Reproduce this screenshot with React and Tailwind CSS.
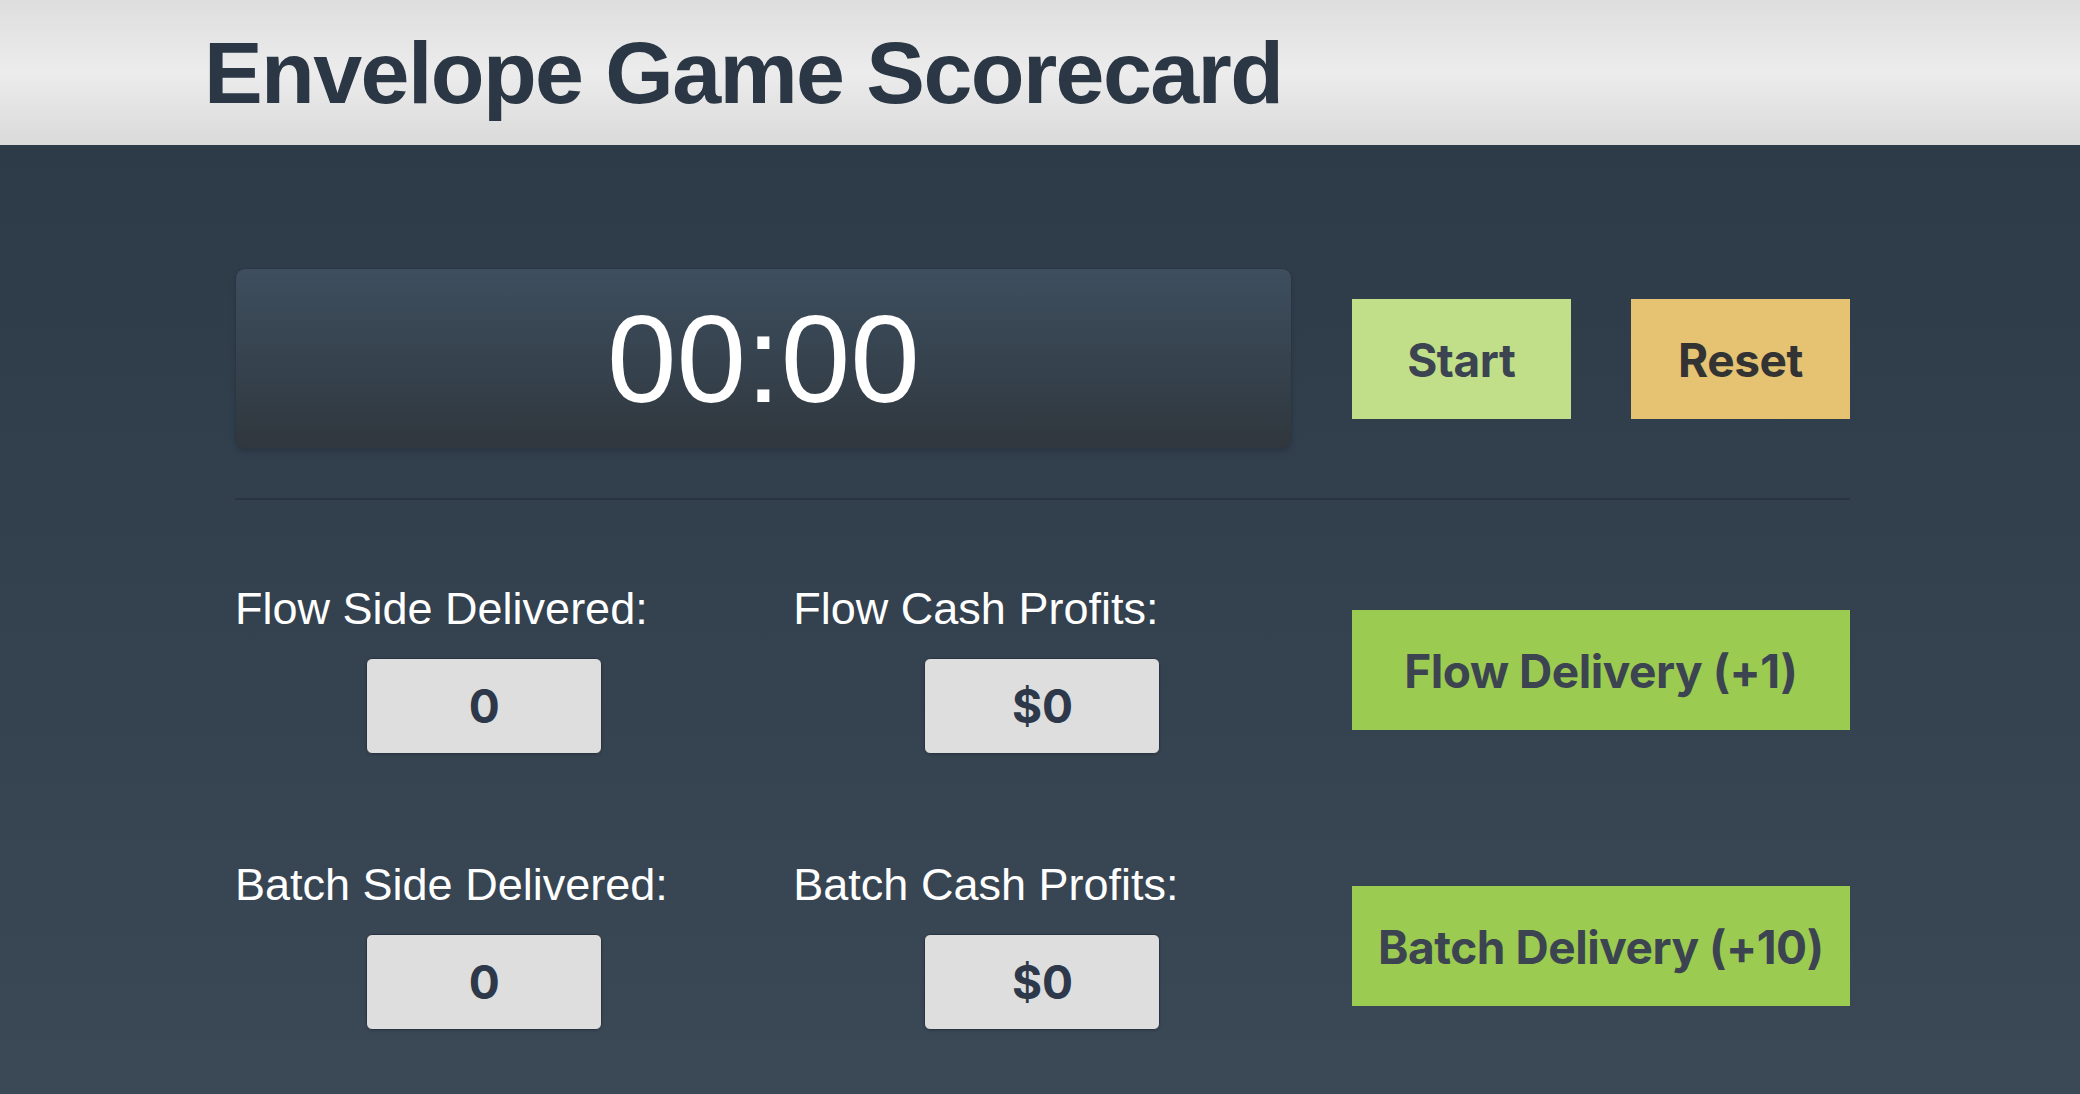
import React, { useState, useEffect } from "react";

const labelFont = { fontFamily: '"Liberation Sans", Arial, sans-serif' };
const btnFont = { fontFamily: 'Inter, "Noto Sans", sans-serif' };

const formatTime = (s) => {
  const m = String(Math.floor(s / 60)).padStart(2, "0");
  const sec = String(s % 60).padStart(2, "0");
  return `${m}:${sec}`;
};

// One stat: label on top, grey value box centred under it
const Stat = ({ label, value }) => (
  <div className="flex flex-col">
    <div className="text-[45px] leading-none text-white" style={labelFont}>
      {label}
    </div>
    <div
      className="mx-auto mt-[27px] flex h-[96px] w-[236px] items-center justify-center rounded-md border border-[#2a3441] bg-[#dedede] text-[46px] font-bold text-[#2d394a] shadow-sm"
      style={btnFont}
    >
      {value}
    </div>
  </div>
);

const BigButton = ({ children, className, onClick }) => (
  <button
    onClick={onClick}
    className={`flex h-[120px] items-center justify-center pt-[3px] text-[46px] font-bold tracking-[-0.01em] ${className}`}
    style={btnFont}
  >
    {children}
  </button>
);

export default function App() {
  const [seconds, setSeconds] = useState(0);
  const [running, setRunning] = useState(false);
  const [flow, setFlow] = useState(0);
  const [batch, setBatch] = useState(0);

  useEffect(() => {
    if (!running) return;
    const id = setInterval(() => setSeconds((s) => s + 1), 1000);
    return () => clearInterval(id);
  }, [running]);

  const reset = () => {
    setRunning(false);
    setSeconds(0);
    setFlow(0);
    setBatch(0);
  };

  return (
    <div className="flex min-h-screen flex-col">
      <header className="flex h-[145px] items-center bg-gradient-to-b from-[#dedede] via-[#ececec] to-[#dadada] pl-[204px]">
        <h1
          className="text-[88px] font-bold leading-none tracking-[-1.6px] text-[#2b3744]"
          style={labelFont}
        >
          Envelope Game Scorecard
        </h1>
      </header>

      <main className="flex-1 bg-gradient-to-b from-[#2d3a48] to-[#3b4856] pb-16 pl-[235px] pr-[230px] pt-[123px]">
        <div className="grid grid-cols-3 items-center gap-x-[60px]">
          <div className="col-span-2 flex h-[181px] items-center justify-center rounded-[10px] border border-[#2b3643] bg-gradient-to-b from-[#3e4e5e] via-[#36434f] to-[#30373d] shadow-md">
            <span
              className="text-[125px] leading-none text-white"
              style={labelFont}
            >
              {formatTime(seconds)}
            </span>
          </div>
          <div className="flex gap-[60px]">
            <BigButton
              className="flex-1 bg-[#c0df88] text-[#3b4450]"
              onClick={() => setRunning(true)}
            >
              Start
            </BigButton>
            <BigButton
              className="flex-1 bg-[#e5c373] text-[#333333]"
              onClick={reset}
            >
              Reset
            </BigButton>
          </div>
        </div>

        <div className="mt-[49px] border-t-2 border-[#2a3541]" />

        <div className="mt-[86px] grid grid-cols-3 items-center gap-x-[60px] gap-y-[108px]">
          <Stat label="Flow Side Delivered:" value={flow} />
          <Stat label="Flow Cash Profits:" value={`$${flow * 5}`} />
          <BigButton
            className="w-full bg-[#9ccb51] text-[#3b4450]"
            onClick={() => setFlow((f) => f + 1)}
          >
            Flow Delivery (+1)
          </BigButton>

          <Stat label="Batch Side Delivered:" value={batch} />
          <Stat label="Batch Cash Profits:" value={`$${batch * 5}`} />
          <BigButton
            className="w-full bg-[#9ccb51] text-[#3b4450]"
            onClick={() => setBatch((b) => b + 10)}
          >
            Batch Delivery (+10)
          </BigButton>
        </div>
      </main>
    </div>
  );
}
